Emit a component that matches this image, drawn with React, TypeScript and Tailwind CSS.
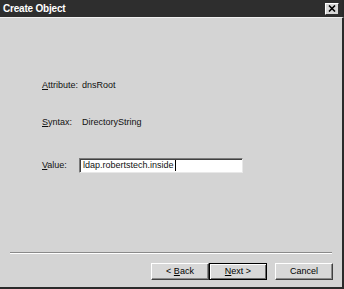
import React from "react";

const font = { fontFamily: '"Liberation Sans", Arial, sans-serif' };

function Btn({ children, primary }: { children: React.ReactNode; primary?: boolean }) {
  return (
    <div
      className={`w-[58px] h-[17px] flex items-center justify-center text-[9px] text-black bg-[#d8d8d8] ${
        primary
          ? "border border-black shadow-[inset_1px_1px_0_#fff,inset_-1px_-1px_0_#6a6a6a]"
          : "border-t border-l border-t-white border-l-white border-r border-b border-r-[#404040] border-b-[#404040] shadow-[inset_-1px_-1px_0_#8a8a8a]"
      }`}
    >
      <span>{children}</span>
    </div>
  );
}

export default function App() {
  return (
    <div className="w-[344px] h-[289px] flex flex-col bg-[#d4d4d4] overflow-hidden" style={font}>
      {/* title bar */}
      <div className="h-[17px] bg-[#2e2e2e] flex items-center justify-between pl-[3px] pr-[3px] border-r-2 border-[#2a2a2a]">
        <span className="text-white font-bold text-[10px] tracking-[-0.2px]">Create Object</span>
        <div className="w-[14px] h-[12px] bg-[#d8d8d8] border-t border-l border-white border-r border-b border-r-[#303030] border-b-[#303030] flex items-center justify-center">
          <svg width="8" height="7" viewBox="0 0 8 7">
            <path d="M1 0.5 L7 6.5 M7 0.5 L1 6.5" stroke="#000" strokeWidth="1.6" />
          </svg>
        </div>
      </div>

      {/* body */}
      <div className="flex-1 flex flex-col border-t border-[#f0f0f0] border-r-2 border-r-[#2a2a2a] border-b-2 border-b-[#2a2a2a] text-[9px] text-[#111]">
        <div className="flex-1 pl-[42px] pt-[62px] flex flex-col">
          <div className="h-[12px] flex items-center">
            <span><u>A</u>ttribute:</span>
            <span className="ml-[4px]">dnsRoot</span>
          </div>
          <div className="h-[12px] mt-[25px] flex items-center">
            <span className="w-[40px]"><u>S</u>yntax:</span>
            <span>DirectoryString</span>
          </div>
          <div className="mt-[29px] flex items-center">
            <span className="w-[37px]"><u>V</u>alue:</span>
            <div className="w-[164px] h-[15px] bg-white border-t border-l border-[#7a7a7a] border-r border-b border-r-[#e8e8e8] border-b-[#e8e8e8] shadow-[inset_1px_1px_0_#404040] flex items-center pl-[3px]">
              <span>ldap.robertstech.inside</span>
              <span className="w-px h-[11px] bg-black ml-px" />
            </div>
          </div>
        </div>

        <div className="mx-[10px] h-[2px] border-t border-[#8a8a8a] border-b border-b-white" />

        <div className="h-[33px] flex items-start justify-end pr-[9px] pt-[9px]">
          <Btn>&lt; <u>B</u>ack</Btn>
          <Btn primary><u>N</u>ext &gt;</Btn>
          <div className="w-[8px]" />
          <Btn>Cancel</Btn>
        </div>
      </div>
    </div>
  );
}
